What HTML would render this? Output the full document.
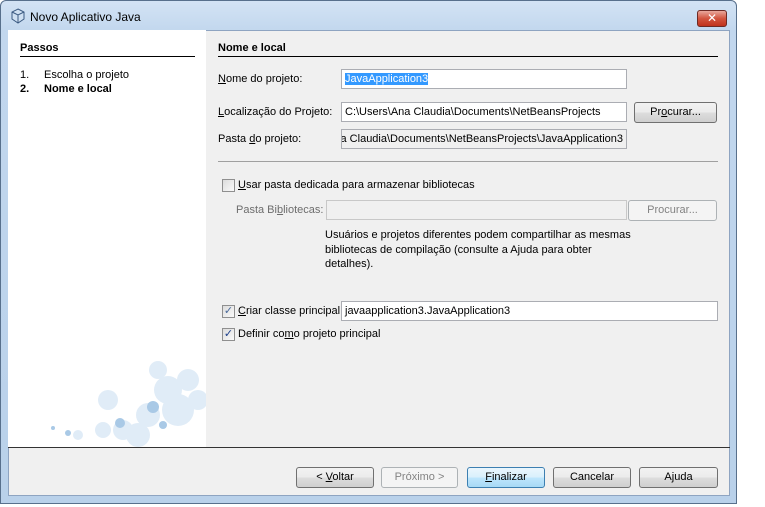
<!DOCTYPE html>
<html><head><meta charset="utf-8"><style>
*{margin:0;padding:0;box-sizing:border-box}
body{width:765px;height:507px;background:#fff;font-family:"Liberation Sans","DejaVu Sans",sans-serif;font-size:11px;color:#000;position:relative;overflow:hidden}
.a{position:absolute}
.win{left:0;top:0;width:737px;height:504px;border:1px solid #58708c;border-radius:6px 6px 0 0;background:linear-gradient(#d3e3f4,#c2d7ee 30px,#b9d1ea)}
.inner{left:8px;top:30px;width:722px;height:466px;background:#f0f0f0;border:1px solid #8ea4c1}
.left{left:8px;top:30px;width:198px;height:417px;background:#fff}
.hl{height:1px;background:#000}
.inp{background:#fff;border:1px solid #abadb3;height:20px;padding:2px 3px;white-space:nowrap;overflow:hidden;line-height:14px}
.btn{height:21px;border:1px solid #707070;border-radius:3px;background:linear-gradient(#f2f2f2,#ebebeb 50%,#dddddd 51%,#cfcfcf);text-align:center;line-height:19px}
.dis{border-color:#adb2b5;background:#f4f4f4;color:#838383}
.cb{width:13px;height:13px;border:1px solid #8f8f8f;background:linear-gradient(135deg,#dcdcdc,#fafafa)}
u{text-decoration:underline}
</style></head><body>
<div class="a win"></div>
<svg class="a" style="left:10px;top:8px" width="16" height="16" viewBox="0 0 16 16"><path d="M8 1 L14 4 L14 11 L8 15 L2 11 L2 4 Z" fill="#cfe0f2" stroke="#3b5a82"/><path d="M2 4 L8 7 L14 4 M8 7 V15" fill="none" stroke="#3b5a82"/></svg>
<div class="a" style="left:30px;top:10px;font-size:12px">Novo Aplicativo Java</div>
<div class="a" style="left:697px;top:10px;width:30px;height:17px;border:1px solid #6d2a24;border-radius:3px;background:linear-gradient(#e8a89c,#d2553f 50%,#c0321c);color:#fff;text-align:center;font-weight:bold;font-size:12px;line-height:15px">✕</div>
<div class="a inner"></div>
<div class="a left"></div>
<svg class="a" style="left:8px;top:360px" width="198" height="87"><g fill="#d4e5f4" opacity=".7"><circle cx="160" cy="30" r="14"/><circle cx="170" cy="50" r="16"/><circle cx="140" cy="55" r="12"/><circle cx="115" cy="70" r="10"/><circle cx="130" cy="75" r="12"/><circle cx="180" cy="20" r="11"/><circle cx="95" cy="70" r="8"/><circle cx="70" cy="75" r="5"/><circle cx="100" cy="40" r="10"/><circle cx="190" cy="40" r="10"/><circle cx="150" cy="10" r="9"/></g><g fill="#a9c9e6"><circle cx="145" cy="47" r="6"/><circle cx="112" cy="63" r="5"/><circle cx="155" cy="65" r="4"/><circle cx="60" cy="73" r="3"/><circle cx="45" cy="68" r="2"/></g></svg>
<div class="a" style="left:20px;top:42px;font-weight:bold">Passos</div>
<div class="a hl" style="left:20px;top:56px;width:175px"></div>
<div class="a" style="left:20px;top:69px">1.</div><div class="a" style="left:44px;top:69px">Escolha o projeto</div>
<div class="a" style="left:20px;top:83px;font-weight:bold">2.</div><div class="a" style="left:44px;top:83px;font-weight:bold">Nome e local</div>
<div class="a" style="left:218px;top:42px;font-weight:bold">Nome e local</div>
<div class="a hl" style="left:218px;top:56px;width:500px"></div>
<div class="a" style="left:218px;top:73px"><u>N</u>ome do projeto:</div>
<div class="a inp" style="left:341px;top:69px;width:286px"><span style="background:#3399ff;color:#fff">JavaApplication3</span></div>
<div class="a" style="left:218px;top:106px"><u>L</u>ocalização do Projeto:</div>
<div class="a inp" style="left:341px;top:102px;width:286px">C:\Users\Ana Claudia\Documents\NetBeansProjects</div>
<div class="a btn" style="left:634px;top:102px;width:83px">Pr<u>o</u>curar...</div>
<div class="a" style="left:218px;top:133px">Pasta <u>d</u>o projeto:</div>
<div class="a inp" style="left:341px;top:129px;width:286px;background:#f0f0f0;direction:rtl;text-align:left">na Claudia\Documents\NetBeansProjects\JavaApplication3</div>
<div class="a" style="left:218px;top:161px;width:500px;height:1px;background:#a0a0a0"></div>
<div class="a cb" style="left:222px;top:179px"></div>
<div class="a" style="left:238px;top:179px"><u>U</u>sar pasta dedicada para armazenar bibliotecas</div>
<div class="a" style="left:236px;top:204px;color:#6d6d6d">Pasta Bi<u>b</u>liotecas:</div>
<div class="a inp" style="left:326px;top:200px;width:301px;background:#f0f0f0;border-color:#c8c8c8"></div>
<div class="a btn dis" style="left:628px;top:200px;width:89px">Procurar...</div>
<div class="a" style="left:325px;top:228px;line-height:14.5px">Usuários e projetos diferentes podem compartilhar as mesmas<br>bibliotecas de compilação (consulte a Ajuda para obter<br>detalhes).</div>
<div class="a cb" style="left:222px;top:305px;color:#4a6a9a;font-size:11px;line-height:11px;text-align:center">✓</div>
<div class="a" style="left:238px;top:305px"><u>C</u>riar classe principal</div>
<div class="a inp" style="left:341px;top:301px;width:377px">javaapplication3.JavaApplication3</div>
<div class="a cb" style="left:222px;top:328px;color:#1c3f8a;font-size:11px;line-height:11px;text-align:center;font-weight:bold">✓</div>
<div class="a" style="left:238px;top:328px">Definir co<u>m</u>o projeto principal</div>
<div class="a hl" style="left:8px;top:447px;width:722px;background:#333"></div>
<div class="a btn" style="left:296px;top:467px;width:78px">&lt; <u>V</u>oltar</div>
<div class="a btn dis" style="left:381px;top:467px;width:77px">Próximo &gt;</div>
<div class="a btn" style="left:467px;top:467px;width:78px;border-color:#3c7fb1;background:linear-gradient(#eaf6fd,#d9f0fc 50%,#bee6fd 51%,#a7d9f5)"><u>F</u>inalizar</div>
<div class="a btn" style="left:553px;top:467px;width:78px">Cancelar</div>
<div class="a btn" style="left:639px;top:467px;width:79px">Ajuda</div>
</body></html>
